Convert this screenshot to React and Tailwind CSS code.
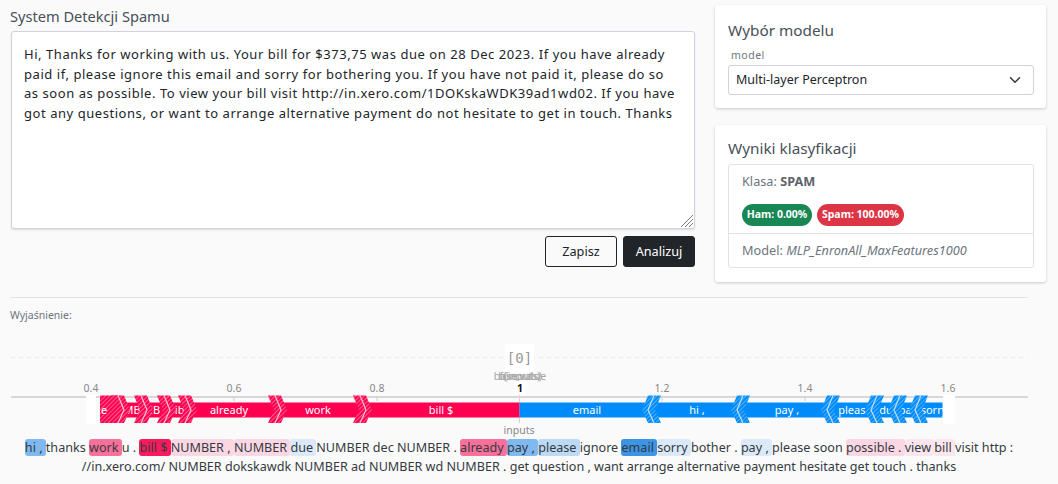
const FONT = "font-['Noto_Sans',sans-serif]";

const MESSAGE =
  'Hi, Thanks for working with us. Your bill for $373,75 was due on 28 Dec 2023. If you have already paid if, please ignore this email and sorry for bothering you. If you have not paid it, please do so as soon as possible. To view your bill visit http://in.xero.com/1DOKskaWDK39ad1wd02. If you have got any questions, or want to arrange alternative payment do not hesitate to get in touch. Thanks';

const TICKS = [
  ['0.4', 91],
  ['0.6', 234],
  ['0.8', 377],
  ['1.2', 662],
  ['1.4', 805],
  ['1.6', 948],
];

const RED_EDGES = [118, 141, 164, 185, 275, 360];
const BLUE_EDGES = [650, 739, 829, 873, 896, 917];

const RED_LABELS = [
  ['MB', 132],
  ['!B', 155],
  ['sib', 177],
  ['already', 229],
  ['work', 318],
  ['bill $', 441],
];

const BLUE_LABELS = [
  ['email', 587],
  ['hi ,', 697],
  ['pay ,', 787],
  ['please', 855],
  ['du', 886],
  ['pay', 908],
  ['sorry', 934],
];

const TOKENS = [
  ['hi , ', 'bg-[#7fb9ef]'],
  ['thanks '],
  ['work ', 'bg-[#f9719b]'],
  ['u . '],
  ['bill $ ', 'bg-[#fb1a5e]'],
  ['NUMBER , ', 'bg-[#fbd7e3]'],
  ['NUMBER ', 'bg-[#fbd7e3]'],
  ['due ', 'bg-[#dbe9f9]'],
  ['NUMBER dec NUMBER . '],
  ['already ', 'bg-[#f9719b]'],
  ['pay , ', 'bg-[#7fb9ef]'],
  ['please ', 'bg-[#bcd9f6]'],
  ['ignore '],
  ['email ', 'bg-[#3d94e4]'],
  ['sorry ', 'bg-[#dbe9f9]'],
  ['bother . '],
  ['pay , ', 'bg-[#dbe9f9]'],
  ['please soon '],
  ['possible . ', 'bg-[#fbd7e3]'],
  ['view ', 'bg-[#fce6ee]'],
  ['bill ', 'bg-[#fce6ee]'],
  ['visit http : //in.xero.com/ NUMBER dokskawdk NUMBER ad NUMBER wd NUMBER . get question , want arrange alternative payment hesitate get touch . thanks'],
];

function Card({ title, children, className }) {
  return (
    <div className={`bg-white rounded-[3px] pl-[13px] pr-[12px] shadow-[0_1px_3px_rgba(0,0,0,0.2)] ${className}`}>
      <h2 className="text-[15.3px] leading-[24px] text-[#495057]">{title}</h2>
      {children}
    </div>
  );
}

function RedChevron({ x }) {
  return (
    <g>
      <polygon
        points={`${x - 7},395.5 ${x + 6},395.5 ${x + 12},410 ${x + 6},423 ${x - 7},423 ${x - 1},410`}
        fill="url(#hatch-red)"
      />
      <polyline points={`${x},395.5 ${x + 6},410 ${x},423`} fill="none" stroke="#ffc2d4" strokeWidth="1.2" />
    </g>
  );
}

function BlueChevron({ x }) {
  return (
    <g>
      <polygon
        points={`${x + 11},395.5 ${x - 2},395.5 ${x - 8},410 ${x - 2},423 ${x + 11},423 ${x + 5},410`}
        fill="url(#hatch-blue)"
      />
      <polyline points={`${x + 4},395.5 ${x - 2},410 ${x + 4},423`} fill="none" stroke="#bfe0ff" strokeWidth="1.2" />
    </g>
  );
}

function ForcePlot() {
  return (
    <svg viewBox="10 340 1018 97" className="block w-[1018px] h-[97px]">
      <defs>
        <pattern id="hatch-red" width="3" height="3" patternUnits="userSpaceOnUse" patternTransform="rotate(45)">
          <rect width="3" height="3" fill="#ff0051" />
          <rect width="1" height="3" fill="#ff5c8a" />
        </pattern>
        <pattern id="hatch-blue" width="3" height="3" patternUnits="userSpaceOnUse" patternTransform="rotate(45)">
          <rect width="3" height="3" fill="#008bfb" />
          <rect width="1" height="3" fill="#4fb0fc" />
        </pattern>
      </defs>

      <line x1="11" x2="1028" y1="357.5" y2="357.5" stroke="#e8e8e8" strokeDasharray="4 4" />
      <rect x="505" y="344" width="29" height="28" fill="#fff" />
      <text x="519.5" y="363" textAnchor="middle" fontSize="14" fill="#999" fontFamily="'DejaVu Sans Mono', monospace">[0]</text>
      <g fontSize="10.5" fill="#999" textAnchor="middle" opacity="0.85">
        <text x="520" y="380">base value</text>
        <text x="520" y="380">f(inputs)</text>
        <text x="520" y="380">b(inputs)</text>
      </g>

      <line x1="11" x2="1028" y1="397" y2="397" stroke="#ccc" strokeWidth="1.5" />
      {TICKS.map(([label, x]) => (
        <g key={label}>
          <line x1={x} x2={x} y1="397" y2="401" stroke="#ccc" />
          <text x={x} y="392" textAnchor="middle" fontSize="10.5" fill="#888">{label}</text>
        </g>
      ))}
      <rect x="514" y="381" width="12" height="14" fill="#fff" />
      <text x="520" y="392" textAnchor="middle" fontSize="10.5" fontWeight="700" fill="#111">1</text>
      <line x1="519.5" x2="519.5" y1="395" y2="423" stroke="#ffc2d4" />

      <rect x="100" y="402.5" width="419.5" height="15" fill="#ff0051" />
      <rect x="519.5" y="402.5" width="423" height="15" fill="#008bfb" />

      <g fontSize="11" fill="#fff" textAnchor="middle">
        {RED_LABELS.map(([label, x]) => <text key={label} x={x} y="413.5">{label}</text>)}
        {BLUE_LABELS.map(([label, x]) => <text key={label} x={x} y="413.5">{label}</text>)}
      </g>

      <polygon points="100,395.5 118,395.5 124,410 118,423 100,423" fill="url(#hatch-red)" />
      {RED_EDGES.map(x => <RedChevron key={x} x={x} />)}
      {BLUE_EDGES.map(x => <BlueChevron key={x} x={x} />)}

      <text x="104" y="413.5" textAnchor="middle" fontSize="11" fill="#fff">e</text>
      <rect x="86" y="395" width="10" height="29" fill="#fff" />
      <rect x="943" y="395" width="12" height="29" fill="#fff" />
      <text x="519" y="434" textAnchor="middle" fontSize="10.5" fill="#888">inputs</text>
    </svg>
  );
}

export default function App() {
  return (
    <div className={`${FONT} bg-[#fafafa] w-[1058px] h-[484px] overflow-hidden pl-[10px] pr-[12px] pt-[5px]`}>
      <div className="flex gap-[20px]">
        <div className="w-[685px]">
          <h1 className="text-[14.6px] leading-[22px] text-[#495057]">System Detekcji Spamu</h1>
          <div className="relative mt-[4px] ml-[1px] w-[684px] h-[198px]">
            <textarea
              readOnly
              defaultValue={MESSAGE}
              className="block w-full h-full resize-none bg-white border border-[#ced4da] rounded-[3px] shadow-[0_1px_2px_rgba(0,0,0,0.12)] px-[12px] py-[13px] text-[13px] leading-[19.5px] tracking-[0.55px] text-[#212529] outline-none"
              spellCheck={false}
            />
            <svg width="14" height="14" viewBox="0 0 14 14" className="absolute right-[1px] bottom-[1px]" stroke="#777" strokeWidth="1" fill="none">
              <path d="M1 13L13 1M5 13l8-8M9 13l4-4" />
            </svg>
          </div>
          <div className="flex justify-end gap-[6px] mt-[7px]">
            <button className="w-[72px] h-[31px] bg-transparent border border-[#212529] rounded-[3px] text-[12.7px] text-[#212529]">Zapisz</button>
            <button className="w-[72px] h-[31px] bg-[#212529] border border-[#212529] rounded-[3px] text-[12.7px] text-white">Analizuj</button>
          </div>
        </div>

        <div className="w-[331px] flex flex-col gap-[17px]">
          <Card title="Wybór modelu" className="h-[103px] pt-[13px]">
            <div className="text-[10.5px] leading-[14px] tracking-[0.5px] text-[#6c757d] pl-[3px] mt-[6px]">model</div>
            <div className="mt-[3px] h-[30px] border border-[#ced4da] rounded-[3px] flex items-center justify-between pl-[7px] pr-[12px] text-[12.5px] text-[#212529]">
              <span>Multi-layer Perceptron</span>
              <svg width="12" height="12" viewBox="0 0 16 16" fill="none" stroke="#343a40" strokeWidth="2" strokeLinecap="round" strokeLinejoin="round">
                <path d="M2 5l6 6 6-6" />
              </svg>
            </div>
          </Card>

          <Card title="Wyniki klasyfikacji" className="h-[157px] pt-[11px]">
            <div className="mt-[4px] border border-[#dee2e6] rounded-[3px] text-[#6c757d] text-[12.7px]">
              <div className="h-[69px] px-[13px] pt-[6px] border-b border-[#dee2e6]">
                <div className="leading-[20px]">Klasa: <strong className="font-bold text-[#5c636a]">SPAM</strong></div>
                <div className="flex gap-[5px] mt-[13px] text-[10.5px] font-bold text-white">
                  <span className="w-[70px] h-[22px] rounded-full bg-[#198754] flex items-center justify-center">Ham: 0.00%</span>
                  <span className="w-[87px] h-[22px] rounded-full bg-[#dc3545] flex items-center justify-center">Spam: 100.00%</span>
                </div>
              </div>
              <div className="h-[33px] px-[13px] flex items-center whitespace-pre">Model: <em>MLP_EnronAll_MaxFeatures1000</em></div>
            </div>
          </Card>
        </div>
      </div>

      <div className="w-[1018px] border-t border-[#e3e3e3] mt-[15px]">
        <div className="text-[10.5px] leading-[14px] text-[#6c757d] mt-[10px]">Wyjaśnienie:</div>
        <div className="mt-[18px]"><ForcePlot /></div>
        <p className="text-center text-[12.6px] leading-[19px] text-[#343a40] mt-[1px]">
          {TOKENS.map(([text, bg], i) =>
            bg ? (
              <span key={i} className={`inline-block h-[17px] leading-[17px] rounded-[3px] whitespace-pre ${bg}`}>{text}</span>
            ) : (
              <span key={i}>{text}</span>
            )
          )}
        </p>
      </div>
    </div>
  );
}
